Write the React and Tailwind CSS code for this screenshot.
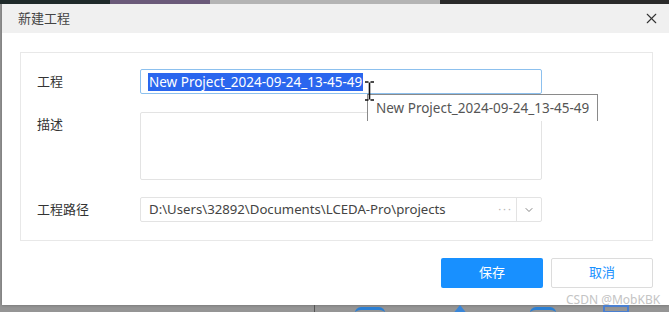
import { X, ChevronDown } from 'lucide-react'

const font = { fontFamily: '"Noto Sans", "Noto Sans CJK SC", sans-serif' }

function Row({ label, children, top }) {
  return (
    <div className={`flex ${top ? 'items-start' : 'items-center'}`}>
      <div className={`w-[103px] text-[13px] text-[#333] ${top ? 'pt-[3px]' : ''}`}>{label}</div>
      {children}
    </div>
  )
}

export default function App() {
  return (
    <div className="relative w-[669px] h-[312px] overflow-hidden bg-[#959595] [font-family:'Noto_Sans','Noto_Sans_CJK_SC',sans-serif]">
      {/* backdrop strip above the dialog */}
      <div className="flex h-[4px]">
        <div className="w-[110px] bg-[#1f2a2a]"></div>
        <div className="w-[100px] bg-[#6b5a7a]"></div>
        <div className="w-[230px] bg-[#b4b4b4]"></div>
        <div className="flex-1 bg-[#2a2a2a]"></div>
      </div>

      <div className="ml-[2px] w-[667px] h-[301px] bg-white flex flex-col shadow-[0_0_3px_rgba(0,0,0,0.3)]">
        <div className="h-[29px] bg-[#f0f0f0] flex items-center justify-between pl-4 pr-[9px]">
          <span className="text-[13px] text-[#444]">新建工程</span>
          <X size={17} strokeWidth={1.5} className="text-[#333]" />
        </div>

        <div className="pt-[19px] pl-[18px] pr-[16px]">
          <div className="border border-[#e8e8e8] pt-4 pb-[18px] pl-4 flex flex-col">
            <Row label="工程">
              <div className="w-[402px] h-[25px] border border-[#8cc0ee] rounded-[2px] flex items-center pl-[7px]">
                <span className="bg-[#2a66ee] text-white text-[13.5px] leading-[18px] px-px">New Project_2024-09-24_13-45-49</span>
              </div>
            </Row>
            <div className="mt-[18px]">
              <Row label="描述" top>
                <div className="w-[402px] h-[68px] border border-[#e3e3e3] rounded-[2px]"></div>
              </Row>
            </div>
            <div className="mt-[17px]">
              <Row label="工程路径">
                <div className="w-[402px] h-[25px] border border-[#e3e3e3] rounded-[2px] flex items-center">
                  <span className="flex-1 pl-2 text-[13.2px] text-[#444]">D:\Users\32892\Documents\LCEDA-Pro\projects</span>
                  <span className="text-[11px] text-[#b5b5b5] tracking-[2px] pr-[3px]">···</span>
                  <div className="w-[25px] h-full border-l border-[#e3e3e3] flex items-center justify-center">
                    <ChevronDown size={12} strokeWidth={1.6} className="text-[#666]" />
                  </div>
                </div>
              </Row>
            </div>
          </div>

          <div className="mt-[17px] flex justify-end gap-2">
            <button className="w-[102px] h-[30px] rounded-[2px] bg-[#1890ff] text-white text-[13px]">保存</button>
            <button className="w-[102px] h-[30px] rounded-[2px] border border-[#dcdcdc] bg-white text-[#1890ff] text-[13px]">取消</button>
          </div>
        </div>
      </div>

      {/* backdrop icons under the dialog */}
      <div className="absolute left-[314px] top-[305px] w-px h-[7px] bg-[#555]"></div>
      <div className="absolute left-[355px] top-[307px] w-[30px] h-[12px] rounded-full border-t-[3px] border-[#2a7fd4]"></div>
      <div className="absolute left-[452px] top-[305px] w-[16px] h-[10px] bg-[#3a86d8] [clip-path:polygon(50%_0,100%_100%,0_100%)]"></div>
      <div className="absolute left-[530px] top-[307px] w-[26px] h-[12px] rounded-full border-t-[3px] border-[#2a7fd4]"></div>
      <div className="absolute left-[603px] top-[305px] w-[26px] h-[8px] border-2 border-[#4a7fd0]"></div>

      {/* native tooltip */}
      <div className="absolute left-[367px] top-[94px] w-[231px] h-[27px] bg-white border-t border-l border-r border-[#8a8a8a] pl-[8px] pt-[3px] text-[13.5px] text-[#555]">
        New Project_2024-09-24_13-45-49
      </div>

      {/* I-beam cursor */}
      <svg className="absolute left-[364px] top-[81px]" width="11" height="20" viewBox="0 0 11 20">
        <path d="M1 1h3.5M6.5 1H10M5.5 1.5v17M1 19h3.5M6.5 19H10" stroke="#111" strokeWidth="1.6" fill="none" />
      </svg>

      <div className="absolute left-[566px] top-[291px] text-[12px] text-[#c4c4c4]" style={font}>CSDN @MobKBK</div>
    </div>
  )
}
